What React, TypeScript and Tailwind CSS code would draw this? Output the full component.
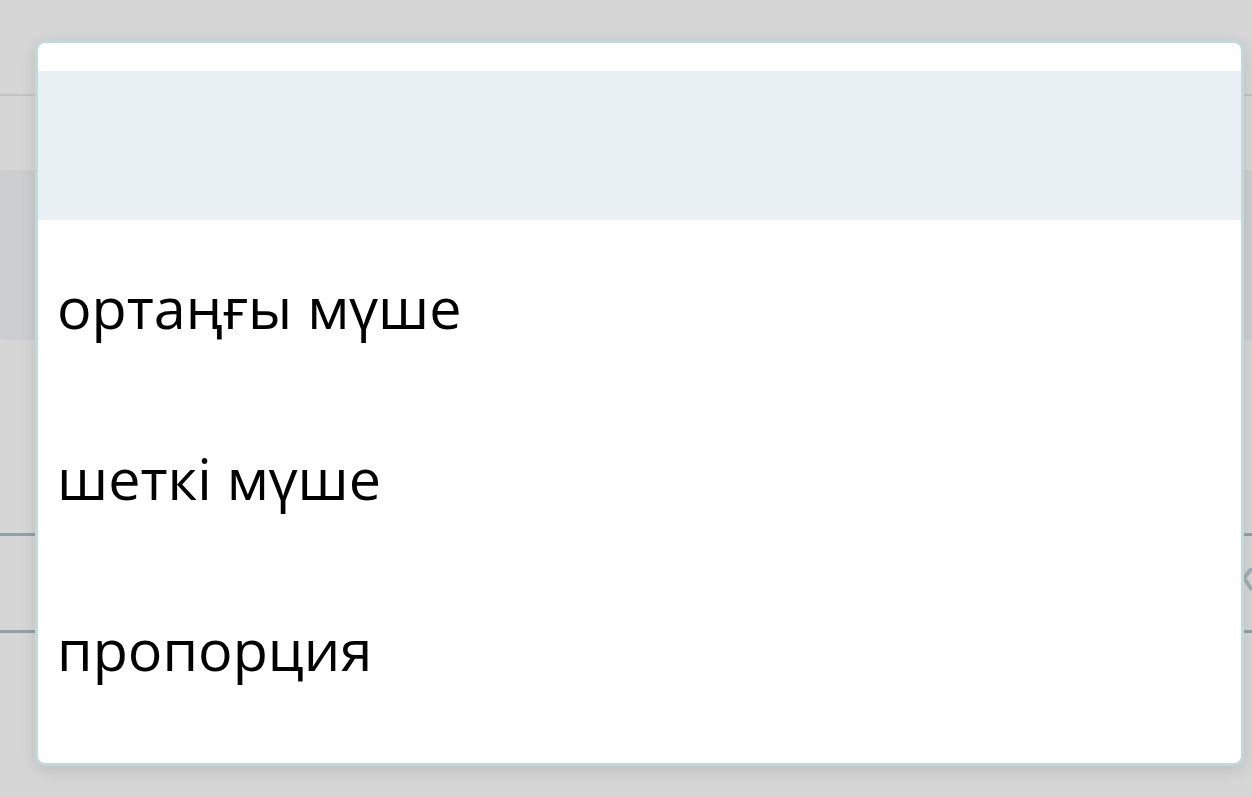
const options = ['', 'ортаңғы мүше', 'шеткі мүше', 'пропорция'];

export default function App() {
  return (
    <div className="relative h-[797px] w-full overflow-hidden bg-[#d6d6d6]" style={{ fontFamily: '"Open Sans", "Noto Sans", sans-serif' }}>
      {/* page behind the overlay */}
      <div className="flex flex-col pt-[94px]">
        <div className="h-[2px] bg-[#c4c4c4]" />
        <div className="mx-[-10px] mt-[74px] h-[170px] rounded-2xl bg-[#cdcecf]" />
        <div className="mt-[193px] h-[3px] bg-[#8fa2a6]" />
        <div className="flex h-[94px] justify-end">
          <svg width="10" height="34" viewBox="0 0 10 34" className="mt-[32px]">
            <path d="M10 0 L2 10 L10 22" fill="none" stroke="#9fb0b4" strokeWidth="4" />
          </svg>
        </div>
        <div className="h-[3px] bg-[#8fa2a6]" />
      </div>

      {/* dropdown */}
      <div className="absolute left-[35px] top-[40px] w-[1209px] rounded-[10px] border-[3px] border-[#c3d8d8] bg-white pt-[28px] pb-[30px] shadow-[0_4px_16px_rgba(0,0,0,0.12)]">
        {options.map((opt, i) => (
          <div
            key={i}
            className={`flex items-center px-[19px] text-[57.5px] leading-none text-black ${i === 0 ? 'h-[149px] bg-[#e8f0f3]' : 'h-[171px] pt-[5px]'}`}
          >
            {opt}
          </div>
        ))}
      </div>
    </div>
  );
}
